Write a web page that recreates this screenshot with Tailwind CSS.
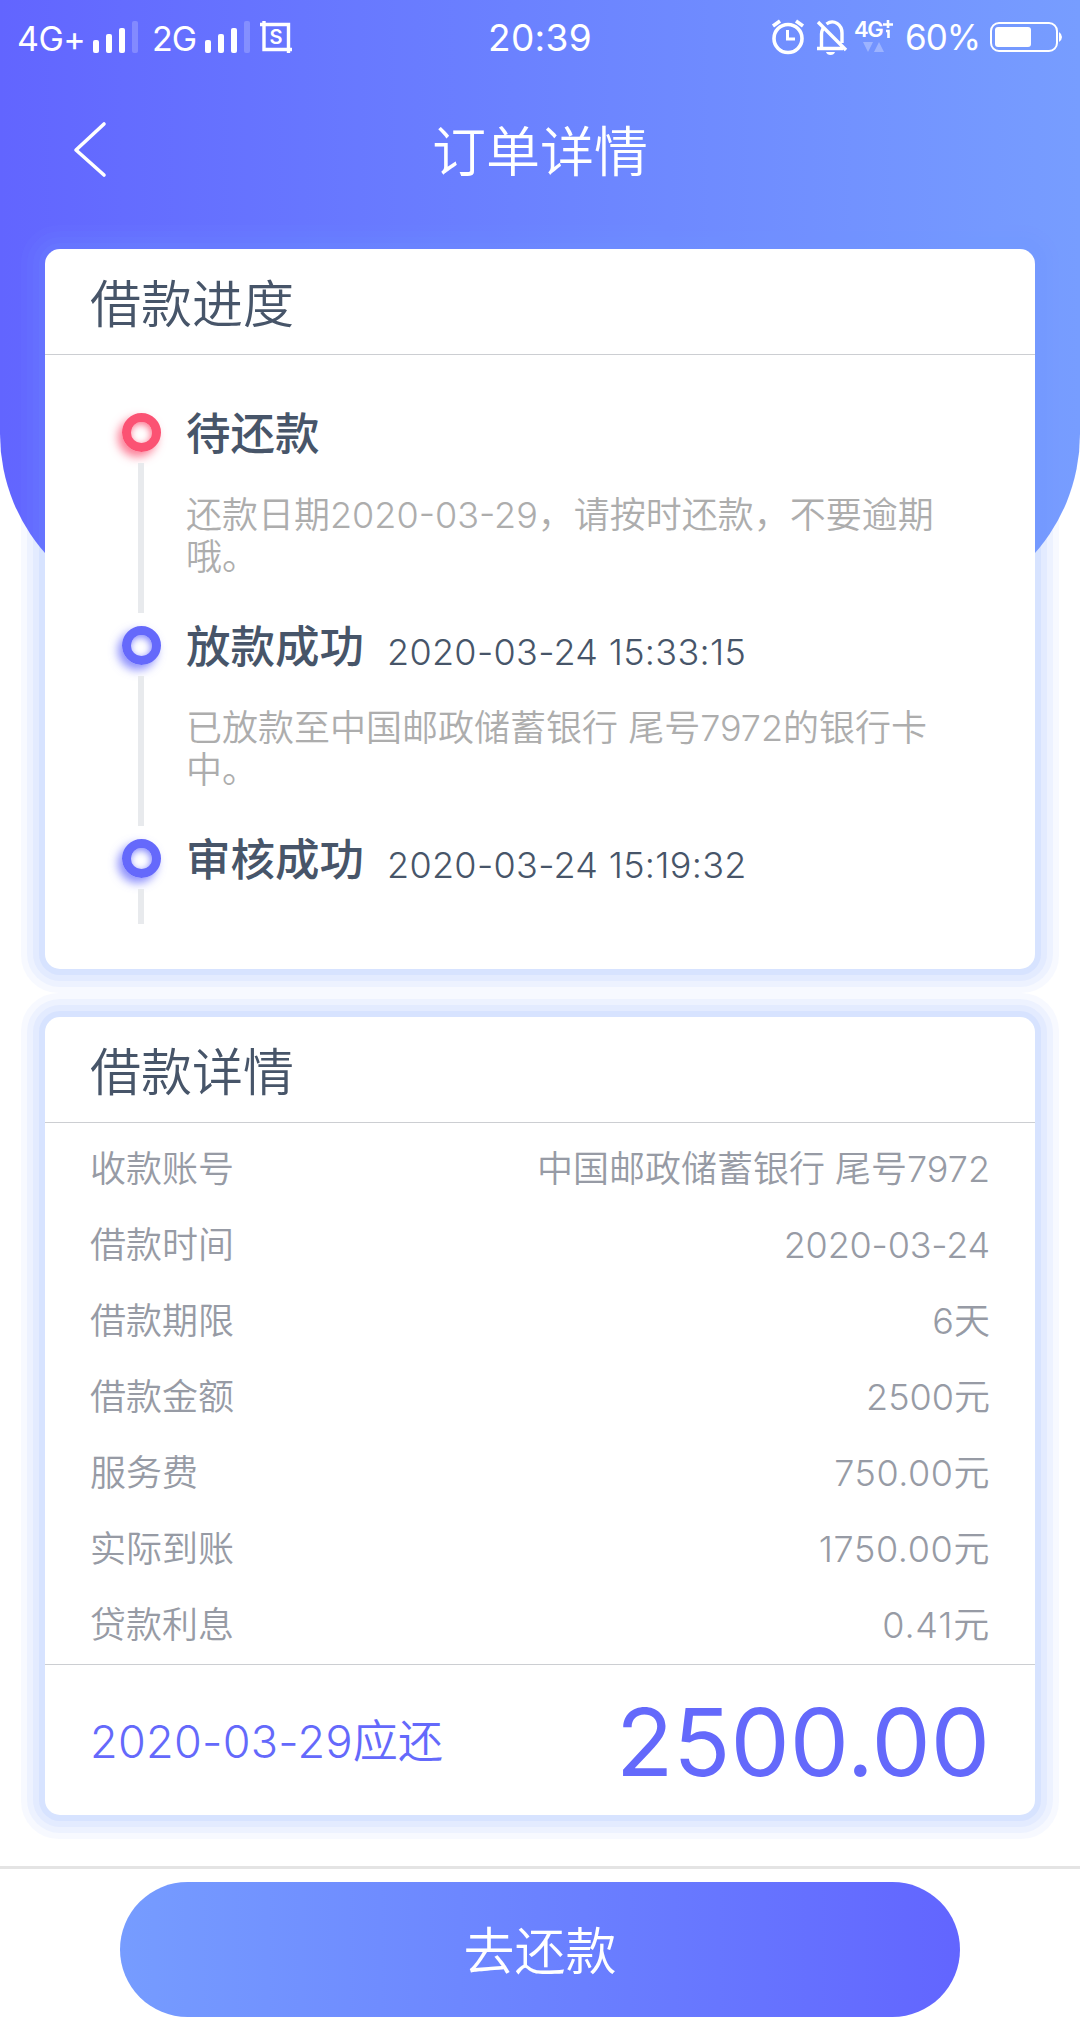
<!DOCTYPE html>
<html lang="zh-CN">
<head>
<meta charset="utf-8">
<title>订单详情</title>
<script src="https://cdn.jsdelivr.net/npm/@tailwindcss/browser@4"></script>
</head>
<body class="bg-white">
<div class="relative flex h-[2034px] w-[1080px] flex-col overflow-hidden bg-white font-['Inter','Noto_Sans_CJK_SC',sans-serif] font-[350] text-[#475569]">
  <div class="absolute inset-x-0 top-0 h-[614px] rounded-b-[180px] bg-linear-to-r from-[#6265ff] to-[#779dff]"></div>

  <!-- Status bar -->
  <div class="relative grid h-[76px] grid-cols-[1fr_auto_1fr] items-center text-[34px] leading-[40px] font-normal text-white">
    <div class="flex items-center pb-[3px] pl-[17px]">
      <span class="w-[76px] pt-[4px] tracking-[-0.500px]">4G+</span>
      <svg class="h-[34px] w-[46px]" viewBox="0 0 46 34" fill="#fff"><rect y="20" width="6" height="13" rx="2"/><rect x="13" y="14" width="6" height="19" rx="2"/><rect x="26" y="8" width="6" height="25" rx="2"/><rect x="39" y="1" width="6" height="32" rx="2" opacity=".2"/></svg>
      <span class="ml-[13px] w-[53px] pt-[4px] tracking-[-1px]">2G</span>
      <svg class="h-[34px] w-[46px]" viewBox="0 0 46 34" fill="#fff"><rect y="20" width="6" height="13" rx="2"/><rect x="13" y="14" width="6" height="19" rx="2"/><rect x="26" y="8" width="6" height="25" rx="2"/><rect x="39" y="1" width="6" height="32" rx="2" opacity=".2"/></svg>
      <svg class="ml-[9px] h-[34px] w-[32px]" viewBox="0 0 32 34" fill="none" stroke="#fff" stroke-width="3.400"><path d="M0 4.500H28.500V33M4 1V29.500H32"/><text x="16" y="24" text-anchor="middle" font-family="Inter" font-size="20" font-weight="600" fill="#fff" stroke="none">S</text></svg>
    </div>
    <span class="text-[37px] tracking-[0.300px]">20:39</span>
    <div class="flex items-center justify-end pr-[18px] pb-[3px]">
      <svg class="h-[36px] w-[34px]" viewBox="0 0 34 36" fill="none" stroke="#fff" stroke-width="3.6"><circle cx="17" cy="19.5" r="14"/><path d="M16.5 11V20H24" stroke-width="3"/><path d="M2 7L9 2M25 2L32 7"/></svg>
      <svg class="ml-[11px] h-[36px] w-[32px]" viewBox="0 0 32 36" fill="none" stroke="#fff" stroke-width="3.4"><path d="M1 29.500H27M5.500 29V15C5.500 13 6 11.500 7 9.500M10.500 5C18 -.5 26 6 26 14V24M2 3L30 31"/><path d="M10 33H19Q18 36 14.500 36T10 33Z" fill="#fff" stroke="none"/></svg>
      <div class="ml-[6px] flex h-[36px] w-[42px] flex-col">
        <div class="flex h-[22px] text-[22px] leading-[20px] font-semibold"><span class="w-[29px] tracking-[-1.500px]">4G</span><svg class="h-[20px] w-[10px]" viewBox="0 0 10 20" fill="none" stroke="#fff" stroke-width="2.600"><path d="M0 5.500H10M5 1V9M3 12H5.500V19"/></svg></div>
        <svg class="ml-[9px] h-[12px] w-[22px]" viewBox="0 0 22 12" fill="#fff" opacity=".3"><path d="M0 1H10L5 11ZM11 11H21L16 1Z"/></svg>
      </div>
      <span class="ml-[9px] w-[75px] text-[35px] font-normal tracking-[-1px]">60%</span>
      <svg class="ml-[10px] h-[32px] w-[72px]" viewBox="0 0 72 32" fill="none" stroke="#fff" stroke-width="2"><rect x="1" y="2" width="66" height="28" rx="8"/><rect x="5" y="6" width="36" height="20" rx="3" fill="#fff" stroke="none"/><path d="M69 11Q72 13 72 16T69 21Z" fill="#fff" stroke="none"/></svg>
    </div>
  </div>

  <!-- Title bar -->
  <header class="relative flex h-[173px] items-start justify-between px-[72px] pt-[44px] text-white">
    <svg class="h-[58px] w-[36px]" viewBox="0 0 36 58" fill="none" stroke="#fff" stroke-width="3.600" stroke-linecap="round" stroke-linejoin="round"><path d="M32 4L4 30L32 55"/></svg>
    <h1 class="pt-[2px] text-[54px] leading-[62px]">订单详情</h1>
    <span class="w-[36px]"></span>
  </header>

  <!-- Loan progress -->
  <section class="relative mx-[45px] h-[720px] rounded-[15px] bg-white shadow-[0_0_0_6px_rgba(117,158,255,0.1),0_0_0_12px_rgba(117,158,255,0.08),0_0_0_18px_rgba(117,158,255,0.07),0_0_0_24px_rgba(117,158,255,0.06)]">
    <h2 class="h-[106px] border-b border-[#ccced2] pl-[45px] text-[51px] leading-[112px]">借款进度</h2>
    <ol class="pt-[50px] pl-[74px]">
      <li class="flex h-[213px]">
        <div class="flex w-[67px] flex-col pl-[3px]">
          <span class="mt-[8px] size-[39px] rounded-full border-[9px] border-[#fb5273] shadow-[-4px_5px_10px_rgba(251,82,115,0.75),inset_-1px_2px_7px_rgba(251,82,115,0.8)]"></span>
          <span class="mt-[11px] ml-[16px] h-[150px] w-[6px] bg-[#e8eaed]"></span>
        </div>
        <div class="flex w-[760px] flex-col">
          <h3 class="h-[56px] text-[44.500px] leading-[58px] font-medium">待还款</h3>
          <p class="mt-[33px] text-[36px] leading-[42px] text-[#adadad]">还款日期2020-03-29，请按时还款，不要逾期<br>哦。</p>
        </div>
      </li>
      <li class="flex h-[213px]">
        <div class="flex w-[67px] flex-col pl-[3px]">
          <span class="mt-[8px] size-[39px] rounded-full border-[9px] border-[#6569fb] shadow-[-4px_5px_10px_rgba(101,105,251,0.75),inset_-1px_2px_7px_rgba(101,105,251,0.8)]"></span>
          <span class="mt-[11px] ml-[16px] h-[150px] w-[6px] bg-[#e8eaed]"></span>
        </div>
        <div class="flex w-[760px] flex-col">
          <div class="flex h-[56px]"><h3 class="text-[44.500px] leading-[58px] font-medium">放款成功</h3><time class="ml-[23px] pt-[10px] text-[36px] leading-[48px] tracking-[0.300px]">2020-03-24 15:33:15</time></div>
          <p class="mt-[33px] text-[36px] leading-[42px] text-[#adadad]">已放款至中国邮政储蓄银行 尾号7972的银行卡<br>中。</p>
        </div>
      </li>
      <li class="flex">
        <div class="flex w-[67px] flex-col pl-[3px]">
          <span class="mt-[8px] size-[39px] rounded-full border-[9px] border-[#6569fb] shadow-[-4px_5px_10px_rgba(101,105,251,0.75),inset_-1px_2px_7px_rgba(101,105,251,0.8)]"></span>
          <span class="mt-[11px] ml-[16px] h-[35px] w-[6px] bg-[#e8eaed]"></span>
        </div>
        <div class="flex h-[56px]"><h3 class="text-[44.500px] leading-[58px] font-medium">审核成功</h3><time class="ml-[23px] pt-[10px] text-[36px] leading-[48px] tracking-[0.300px]">2020-03-24 15:19:32</time></div>
      </li>
    </ol>
  </section>

  <!-- Loan details -->
  <section class="relative mx-[45px] mt-[48px] h-[798px] rounded-[15px] bg-white shadow-[0_0_0_6px_rgba(117,158,255,0.1),0_0_0_12px_rgba(117,158,255,0.08),0_0_0_18px_rgba(117,158,255,0.07),0_0_0_24px_rgba(117,158,255,0.06)]">
    <h2 class="h-[106px] border-b border-[#ccced2] pl-[45px] text-[51px] leading-[112px]">借款详情</h2>
    <dl class="h-[542px] border-b border-[#ccced2] px-[45px] pt-[8px] text-[36px] leading-[76px] text-[#979ba5]">
      <div class="flex justify-between"><dt>收款账号</dt><dd>中国邮政储蓄银行 尾号7972</dd></div>
      <div class="flex justify-between"><dt>借款时间</dt><dd class="tracking-[-0.200px]">2020-03-24</dd></div>
      <div class="flex justify-between"><dt>借款期限</dt><dd>6天</dd></div>
      <div class="flex justify-between"><dt>借款金额</dt><dd>2500元</dd></div>
      <div class="flex justify-between"><dt>服务费</dt><dd class="tracking-[0.500px]">750.00元</dd></div>
      <div class="flex justify-between"><dt>实际到账</dt><dd class="tracking-[0.600px]">1750.00元</dd></div>
      <div class="flex justify-between"><dt>贷款利息</dt><dd class="tracking-[0.800px]">0.41元</dd></div>
    </dl>
    <div class="flex h-[150px] items-center justify-between px-[45px] pt-[3px] text-[#6469fb]">
      <span class="pt-[1px] text-[45px] leading-[60px] tracking-[0.300px]">2020-03-29应还</span>
      <span class="text-[94px] leading-[100px] font-normal">2500.00</span>
    </div>
  </section>

  <!-- Bottom action bar -->
  <footer class="relative mt-[51px] flex h-[168px] items-start justify-center border-t-3 border-[#e4e4e4] bg-white pt-[13px]">
    <button class="h-[135px] w-[840px] rounded-full bg-linear-to-r from-[#769cff] to-[#6265ff] pt-[4px] text-[51px] leading-[131px] text-white">去还款</button>
  </footer>
</div>
</body>
</html>
